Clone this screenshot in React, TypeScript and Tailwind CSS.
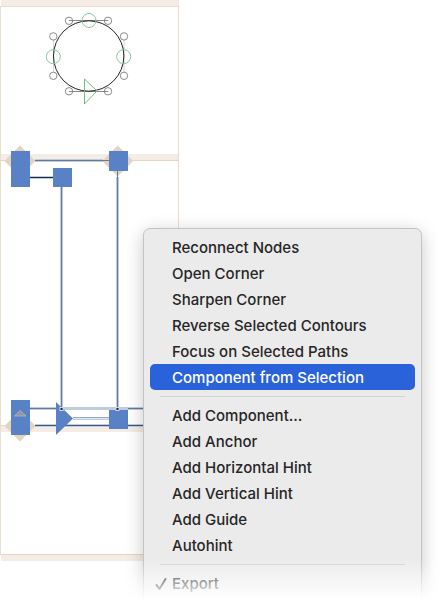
type Item = { label: string; active?: boolean; checked?: boolean };

const groups: Item[][] = [
  [
    { label: "Reconnect Nodes" },
    { label: "Open Corner" },
    { label: "Sharpen Corner" },
    { label: "Reverse Selected Contours" },
    { label: "Focus on Selected Paths" },
    { label: "Component from Selection", active: true },
  ],
  [
    { label: "Add Component..." },
    { label: "Add Anchor" },
    { label: "Add Horizontal Hint" },
    { label: "Add Vertical Hint" },
    { label: "Add Guide" },
    { label: "Autohint" },
  ],
  [{ label: "Export", checked: true }],
];

const handles = [
  [69, 20.8], [108, 20.8], [53.3, 36.4], [124, 36.4],
  [53.3, 75.8], [124, 75.8], [69, 91.3], [108, 91.3],
];

function GlyphCanvas() {
  return (
    <svg width="180" height="600" viewBox="0 0 180 600" className="block" aria-label="Glyph outline" role="img">
      {/* alignment zones and metrics lines */}
      <g fill="#f5ede5">
        <rect x="1" y="0" width="178" height="6" />
        <rect x="1" y="154" width="178" height="6" />
        <rect x="1" y="426" width="178" height="6" />
        <rect x="1" y="555" width="178" height="6" />
      </g>
      <g fill="#ecdccf">
        <rect x="0" y="6" width="179" height="1" />
        <rect x="0" y="7" width="1" height="548" />
        <rect x="178" y="7" width="1" height="548" />
      </g>
      <g fill="#e6d5bf">
        <rect x="0" y="160" width="179" height="1" />
        <rect x="0" y="425" width="179" height="1" />
        <rect x="0" y="554" width="179" height="1" />
      </g>
      <g fill="#e4d3bf">
        <path d="M20 145.500L35.500 161 20 176.500 4.500 161z" />
        <path d="M117.700 145.500L133.200 161 117.700 176.500 102.200 161z" />
        <path d="M20 410.500L35.500 426 20 441.500 4.500 426z" />
      </g>

      {/* round contour */}
      <g fill="none" strokeWidth="1">
        <path d="M69 20.500H108M69 91.500H108" stroke="#8a8a8a" />
        <path d="M53.500 40V72M124 40V72" stroke="#d4d4d4" />
        {handles.map(([x, y]) => (
          <circle key={`${x}-${y}`} cx={x} cy={y} r="3.7" stroke="#6e6e6e" strokeWidth="0.8" />
        ))}
      </g>
      <circle cx="88.700" cy="56" r="35.200" fill="none" stroke="#222" strokeWidth="1" />
      <g fill="none" stroke="#88c6a0" strokeWidth="1">
        <circle cx="89" cy="20.500" r="7" />
        <circle cx="53.300" cy="56.700" r="7" />
        <circle cx="123.700" cy="56.700" r="7" />
        <path d="M84.500 79V104L97 91z" stroke="#6fbd8c" />
      </g>

      {/* selected segments */}
      <g fill="none" stroke="#bccde2" strokeWidth="3">
        <path d="M35 160.500H103M30 177.500H53M61.500 187V409M117.500 177V409" />
        <path d="M30 408.500H180M35 425.500H180M73 418.500H109" />
      </g>
      <g fill="none" stroke="#647898" strokeWidth="1">
        <path d="M35 160.500H109M61.500 187V409M117.500 171V409" />
        <path d="M30 408.500H56M128 408.500H180" />
        <path d="M30 177.500H53" stroke="#1c2c40" />
        <path d="M35 425.500H180" stroke="#43587a" />
        <path d="M73 418.500H109" stroke="#e0e8f1" />
        <path d="M73 417.500H109" stroke="#92a8c0" />
      </g>

      {/* selected nodes */}
      <g fill="#5981c5">
        <rect x="11" y="151" width="19" height="36" />
        <rect x="109" y="151" width="19" height="20" />
        <rect x="53" y="168" width="19" height="19" />
        <rect x="11" y="400" width="19" height="35" />
        <rect x="109" y="410" width="19" height="19" />
        <path d="M56 402L73 418.500 56 435z" />
      </g>
      <path d="M14.500 416L20.200 410.500 26 416z" fill="#8e96a8" stroke="#b9b9b9" strokeWidth="0.8" />
      <g fill="#222" stroke="#d3d7dc" strokeWidth="1">
        <rect x="60" y="407.500" width="3" height="3" />
        <rect x="116" y="407.500" width="3" height="3" />
      </g>
    </svg>
  );
}

function CheckMark() {
  return (
    <svg width="12" height="14" viewBox="0 0 12 14" fill="none" stroke="currentColor" strokeWidth="2" strokeLinecap="round" strokeLinejoin="round" aria-hidden="true">
      <path d="M1.500 8L4.500 12 10.500 2" />
    </svg>
  );
}

function MenuItem({ label, active, checked }: Item) {
  return (
    <button
      type="button"
      role={checked ? "menuitemcheckbox" : "menuitem"}
      aria-checked={checked}
      className={`flex h-[26px] w-full items-center rounded-[5px] pt-0.5 text-left text-[15px] font-[450] ${
        active ? "bg-[#2962d9] text-white" : "text-[#262626]"
      }`}
    >
      <span className="flex w-[22px] justify-center">{checked && <CheckMark />}</span>
      {label}
    </button>
  );
}

export default function App() {
  return (
    <main className="relative h-screen overflow-hidden bg-white font-['Inter',sans-serif]">
      <GlyphCanvas />
      <div
        role="menu"
        className="absolute top-[228px] left-[143px] w-[279px] rounded-[7px] border border-[#c3c3c3] bg-[#ebebeb] px-1.5 pt-[5px] pb-10 shadow-[0_4px_18px_rgba(0,0,0,0.22)]"
      >
        {groups.map((items, i) => (
          <div key={i} role="group">
            {i > 0 && (
              <div className="flex h-3 items-center px-2.5">
                <hr className="w-full border-[#d3d3d3]" />
              </div>
            )}
            {items.map((item) => (
              <MenuItem key={item.label} {...item} />
            ))}
          </div>
        ))}
      </div>
      <div className="pointer-events-none absolute inset-x-0 bottom-0 h-10 bg-linear-to-b from-transparent to-white" />
    </main>
  );
}
